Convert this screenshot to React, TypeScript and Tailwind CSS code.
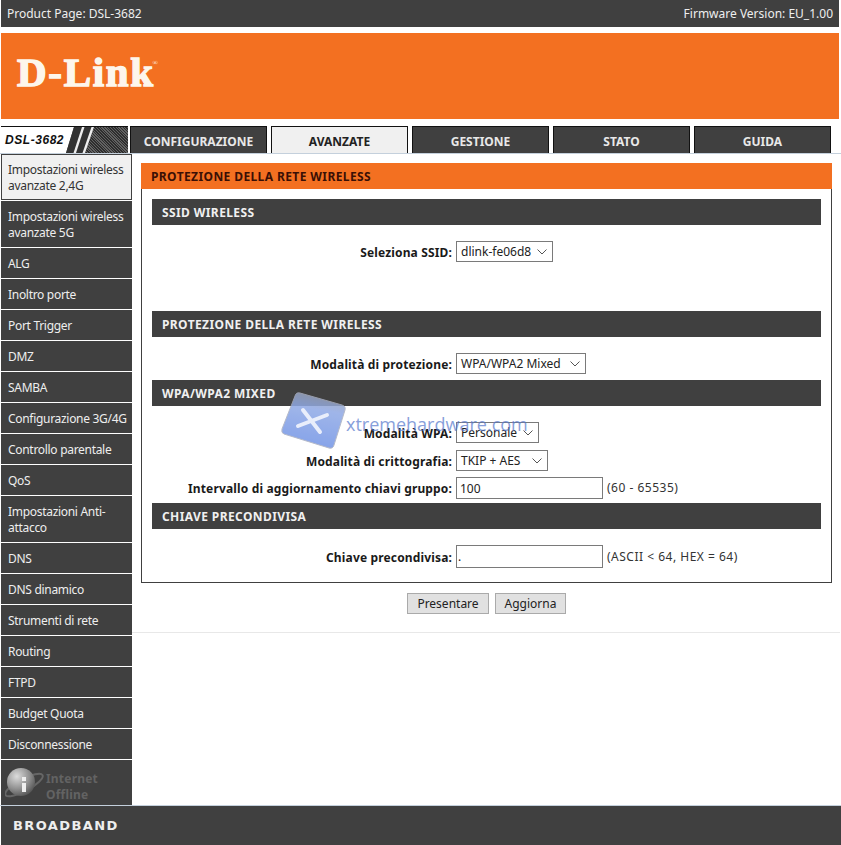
import React from "react";

const font = { fontFamily: '"Noto Sans", sans-serif' };

const nav: [string, boolean][] = [
  ["Impostazioni wireless avanzate 5G", true],
  ["ALG", false],
  ["Inoltro porte", false],
  ["Port Trigger", false],
  ["DMZ", false],
  ["SAMBA", false],
  ["Configurazione 3G/4G", false],
  ["Controllo parentale", false],
  ["QoS", false],
  ["Impostazioni Anti-attacco", true],
  ["DNS", false],
  ["DNS dinamico", false],
  ["Strumenti di rete", false],
  ["Routing", false],
  ["FTPD", false],
  ["Budget Quota", false],
  ["Disconnessione", false],
];

const tabs = ["CONFIGURAZIONE", "AVANZATE", "GESTIONE", "STATO", "GUIDA"];

function Bar({ children }: { children: React.ReactNode }) {
  return (
    <div className="mx-[10px] h-[26px] bg-[#404040] pl-[10px] text-[12px] leading-[27px] font-bold tracking-[0.4px] text-[#f0f0f0]">
      {children}
    </div>
  );
}

function Row({ label, children, className }: { label: string; children: React.ReactNode; className?: string }) {
  return (
    <div className={`flex items-center ${className ?? ""}`}>
      <div className="w-[314px] pt-[2px] pr-[4px] text-right text-[12px] font-bold tracking-[0.15px] whitespace-nowrap text-[#1a1a1a]">
        {label}
      </div>
      {children}
    </div>
  );
}

function Sel({ text, w }: { text: string; w: string }) {
  return (
    <div className={`flex h-[21px] ${w} items-center justify-between border border-[#7a7a7a] bg-white pr-[5px] pl-[4px] text-[12px] text-[#222]`}>
      <span className="pt-px">{text}</span>
      <svg width="10" height="6" viewBox="0 0 10 6" fill="none" stroke="#555" strokeWidth="1">
        <path d="M0.5 0.5 L5 5 L9.5 0.5" />
      </svg>
    </div>
  );
}

export default function App() {
  return (
    <div className="relative h-[845px] w-[841px] overflow-hidden bg-white" style={font}>
      {/* top bar */}
      <div className="ml-px flex h-[27px] w-[838px] items-center justify-between bg-[#404040] pr-[6px] pl-[6px] text-[12px] text-[#eeeeee]">
        <span>Product Page: DSL-3682</span>
        <span>Firmware Version: EU_1.00</span>
      </div>
      {/* banner */}
      <div className="mt-[6px] ml-px flex h-[86px] w-[838px] items-start bg-[#f37021] pt-[15px] pl-[16px]">
        <span
          className="relative text-[41px] leading-[48px] font-bold tracking-[1.7px] text-[#fdf6ec] [-webkit-text-stroke:1.4px_#fdf6ec]"
          style={{ fontFamily: '"Liberation Serif", serif' }}
        >
          D-Link
          <span className="absolute top-[11px] -right-[3px] text-[7px] leading-[8px] font-normal tracking-normal [-webkit-text-stroke:0]">®</span>
        </span>
      </div>
      {/* tabs */}
      <div className="mt-[7px] ml-px flex h-[27px] items-stretch">
        <div className="relative w-[127px] overflow-hidden border-t border-[#111] bg-[repeating-linear-gradient(45deg,#2e2e2e_0px,#2e2e2e_1px,#626262_1px,#626262_2px)]">
          <svg width="127" height="26" viewBox="0 0 127 26" className="absolute top-0 left-0">
            <path d="M0 0 H73 L65 26 H0 Z" fill="#ffffff" />
            <path d="M73 0 H93 L84 26 H65 Z" fill="#333333" />
            <path d="M81 0 H83.5 L75 26 H72.5 Z" fill="#eeeeee" />
            <path d="M90.5 0 H93 L84 26 H81.5 Z" fill="#eeeeee" />
          </svg>
          <div className="relative pt-[5px] pl-[4px] text-[12px] leading-[16px] font-bold tracking-[0.55px] text-[#111] italic" style={{ fontFamily: '"Liberation Sans", sans-serif' }}>
            DSL-3682
          </div>
        </div>
        <div className="ml-[2px] flex gap-[4px]">
          {tabs.map((t) => {
            const active = t === "AVANZATE";
            return (
              <div
                key={t}
                className={`w-[137px] border border-b-0 border-[#111] pt-[7px] text-center text-[12px] leading-[16px] font-bold ${
                  active ? "bg-[#f0f0f0] text-[#222]" : "bg-[#404040] text-[#e8e8e8]"
                }`}
              >
                {t}
              </div>
            );
          })}
        </div>
      </div>
      <div className="h-px w-full bg-[#c4d0dc]" />
      {/* body */}
      <div className="flex h-[651px] items-stretch">
        <div className="ml-px flex w-[131px] flex-col gap-px text-[12px] leading-[16px] tracking-[-0.3px]">
          <div className="h-[46px] border border-[#404040] bg-[#f0f0f0] px-[6px] pt-[7px] text-[#333]">
            Impostazioni wireless avanzate 2,4G
          </div>
          {nav.map(([n, tall]) => (
            <div
              key={n}
              className={`bg-[#404040] px-[7px] pt-[8px] text-[#eeeeee] ${tall ? "h-[46px]" : "h-[30px] whitespace-nowrap"}`}
            >
              {n}
            </div>
          ))}
          <div className="flex h-[45px] items-start bg-[#404040]">
            <svg width="44" height="42" viewBox="0 0 44 42" className="mt-[3px] ml-[4px] shrink-0">
              <defs>
                <radialGradient id="ball" cx="35%" cy="30%" r="75%">
                  <stop offset="0%" stopColor="#dcdcdc" />
                  <stop offset="60%" stopColor="#909090" />
                  <stop offset="100%" stopColor="#555" />
                </radialGradient>
              </defs>
              <ellipse cx="19" cy="22" rx="21" ry="6" transform="rotate(-28 19 22)" fill="none" stroke="#666666" strokeWidth="2" />
              <circle cx="16" cy="19" r="14" fill="url(#ball)" />
              <rect x="17" y="20" width="4" height="9" fill="#eeeeee" />
              <rect x="17" y="14" width="4" height="4" fill="#eeeeee" />
            </svg>
            <div className="-ml-[3px] pt-[11px] text-[12px] leading-[16px] font-bold tracking-[0.2px] text-[#636363]">
              Internet
              <br />
              Offline
            </div>
          </div>
        </div>
        {/* main */}
        <div className="flex-1 pl-[9px]">
          <div className="mt-[9px] w-[691px] border-x border-b border-[#404040] pb-[14px]">
            <div className="-mx-px h-[26px] bg-[#f37021] pl-[10px] text-[12px] leading-[27px] font-bold tracking-[0.4px] text-[#3a0f05]">
              PROTEZIONE DELLA RETE WIRELESS
            </div>
            <div className="mt-[10px]">
              <Bar>SSID WIRELESS</Bar>
              <Row label="Seleziona SSID:" className="mt-[16px]">
                <Sel text="dlink-fe06d8" w="w-[97px]" />
              </Row>
              <div className="h-[49px]" />
              <Bar>PROTEZIONE DELLA RETE WIRELESS</Bar>
              <Row label="Modalità di protezione:" className="mt-[16px]">
                <Sel text="WPA/WPA2 Mixed" w="w-[130px]" />
              </Row>
              <div className="mt-[6px]">
                <Bar>WPA/WPA2 MIXED</Bar>
              </div>
              <Row label="Modalità WPA:" className="mt-[16px]">
                <Sel text="Personale" w="w-[83px]" />
              </Row>
              <Row label="Modalità di crittografia:" className="mt-[7px]">
                <Sel text="TKIP + AES" w="w-[92px]" />
              </Row>
              <Row label="Intervallo di aggiornamento chiavi gruppo:" className="mt-[6px]">
                <input
                  readOnly
                  value="100"
                  className="h-[22px] w-[147px] border border-[#7a7a7a] bg-white px-[3px] text-[12px] text-[#222]"
                />
                <span className="ml-[4px] text-[12px] tracking-[0.5px] text-[#333]">(60 - 65535)</span>
              </Row>
              <div className="mt-[4px]">
                <Bar>CHIAVE PRECONDIVISA</Bar>
              </div>
              <Row label="Chiave precondivisa:" className="mt-[16px]">
                <input
                  readOnly
                  value="."
                  className="h-[23px] w-[147px] border border-[#7a7a7a] bg-white px-[1px] text-[12px] text-[#222]"
                />
                <span className="ml-[4px] text-[12px] tracking-[0.5px] text-[#333]">(ASCII &lt; 64, HEX = 64)</span>
              </Row>
            </div>
          </div>
          <div className="mt-[10px] flex w-[691px] justify-center gap-[6px]">
            <button className="h-[21px] w-[82px] border border-[#aaaaaa] bg-[#e1e1e1] text-[12px] text-[#222]">
              Presentare
            </button>
            <button className="h-[21px] w-[71px] border border-[#aaaaaa] bg-[#e1e1e1] text-[12px] text-[#222]">
              Aggiorna
            </button>
          </div>
          <div className="mt-[18px] -ml-[9px] h-px w-[708px] bg-[#e8e8e8]" />
        </div>
      </div>
      {/* footer */}
      <div className="h-px w-full bg-[#c4d0dc]" />
      <div className="ml-px flex h-[39px] w-full items-center bg-[#404040] pl-[12px]">
        <span className="text-[13px] font-bold tracking-[1.4px] text-[#eeeeee]" style={{ fontFamily: '"DejaVu Sans", sans-serif' }}>
          BROADBAND
        </span>
      </div>
      {/* watermark over the form */}
      <div className="pointer-events-none absolute top-[392px] left-[281px] flex items-start">
        <svg width="66" height="60" viewBox="0 0 66 60">
          <defs>
            <linearGradient id="wm" x1="0.6" y1="0" x2="0.4" y2="1">
              <stop offset="0%" stopColor="#9aa4b8" />
              <stop offset="30%" stopColor="#8fa9e6" />
              <stop offset="100%" stopColor="#6f92e6" />
            </linearGradient>
          </defs>
          <path d="M19 1 L61 13 Q65 14 64 18 L53 53 Q52 57 48 56 L3 42 Q0 41 1 37 L14 4 Q15 0 19 1 Z" fill="url(#wm)" stroke="#a8aec0" strokeWidth="1" opacity="0.85" />
          <path d="M22 18 L39 40 M46 23 L17 34" stroke="#e9eefb" strokeWidth="4" strokeLinecap="round" fill="none" />
        </svg>
        <span className="mt-[19px] -ml-[1px] text-[18px] leading-[26px] text-[#5577cc] opacity-70" style={{ fontFamily: '"Open Sans", sans-serif' }}>
          xtremehardware.com
        </span>
      </div>
    </div>
  );
}
